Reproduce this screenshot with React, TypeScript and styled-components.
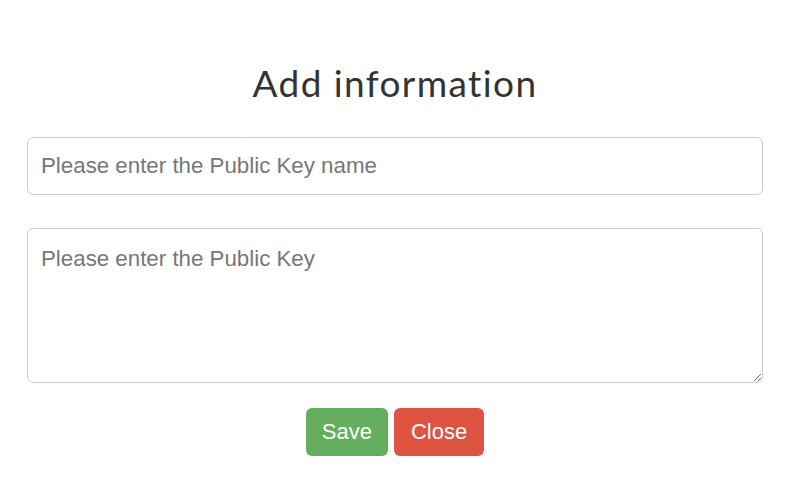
import React from "react";
import styled, { createGlobalStyle } from "styled-components";

const Global = createGlobalStyle`
  html, body { margin: 0; padding: 0; background: #fff; }
  body { font-family: "Liberation Sans", Arial, sans-serif; }
  * { box-sizing: border-box; }
`;

const Modal = styled.div`
  width: 788px;
  height: 482px;
  background: #fff;
  padding: 60px 25px 0 27px;
  display: flex;
  flex-direction: column;
`;

const Title = styled.h1`
  margin: 0;
  text-align: center;
  font-family: "Lato", sans-serif;
  font-weight: 400;
  font-size: 37px;
  letter-spacing: 1.4px;
  line-height: 46px;
  color: #333;
`;

const Input = styled.input`
  margin-top: 31px;
  width: 100%;
  height: 58px;
  border: 1px solid #ccc;
  border-radius: 6px;
  padding: 0 13px;
  font-family: "Liberation Sans", Arial, sans-serif;
  font-size: 22.3px;
  color: #555;
  outline: none;
  &::placeholder { color: #777; }
`;

const TextArea = styled.textarea`
  margin-top: 33px;
  width: 100%;
  height: 155px;
  border: 1px solid #ccc;
  border-radius: 6px;
  padding: 16px 13px;
  font-family: "Liberation Sans", Arial, sans-serif;
  font-size: 22.3px;
  line-height: 28px;
  color: #555;
  outline: none;
  display: block;
  &::placeholder { color: #777; }
`;

const Actions = styled.div`
  margin-top: 25px;
  display: flex;
  justify-content: center;
  gap: 6px;
`;

const Button = styled.button<{ $tone: "success" | "danger" }>`
  height: 48px;
  padding: 0 ${(p) => (p.$tone === "success" ? "16px" : "17px")};
  border: none;
  border-radius: 6px;
  background: ${(p) => (p.$tone === "success" ? "#64ae5d" : "#df5341")};
  color: #fff;
  font-family: "Liberation Sans", Arial, sans-serif;
  font-size: 22px;
  cursor: pointer;
`;

export default function App() {
  return (
    <>
      <Global />
      <Modal>
        <Title>Add information</Title>
        <Input placeholder="Please enter the Public Key name" />
        <TextArea placeholder="Please enter the Public Key" />
        <Actions>
          <Button $tone="success">Save</Button>
          <Button $tone="danger">Close</Button>
        </Actions>
      </Modal>
    </>
  );
}
